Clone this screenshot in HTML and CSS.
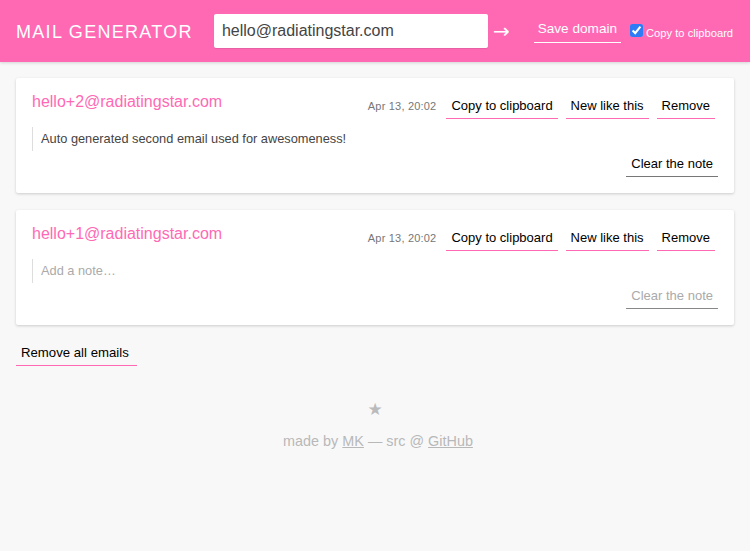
FILE: index.html
```html
<!DOCTYPE html>
<html>
<head>
<meta charset="utf-8">
<link rel="stylesheet" href="styles.css">
</head>
<body>
<header class="topbar">
  <h1 class="brand">MAIL GENERATOR</h1>
  <input class="domain-input" type="text" value="hello@radiatingstar.com">
  <span class="arrow">→</span>
  <button class="btn btn-light">Save domain</button>
  <label class="clip-opt"><input type="checkbox" checked><span>Copy to clipboard</span></label>
</header>
<main class="content">
  <section class="card">
    <div class="card-head">
      <div class="email">hello+2@radiatingstar.com</div>
      <div class="actions">
        <span class="date">Apr 13, 20:02</span>
        <button class="btn">Copy to clipboard</button>
        <button class="btn">New like this</button>
        <button class="btn">Remove</button>
      </div>
    </div>
    <div class="note">Auto generated second email used for awesomeness!</div>
    <div class="card-foot"><button class="btn btn-gray">Clear the note</button></div>
  </section>
  <section class="card">
    <div class="card-head">
      <div class="email">hello+1@radiatingstar.com</div>
      <div class="actions">
        <span class="date">Apr 13, 20:02</span>
        <button class="btn">Copy to clipboard</button>
        <button class="btn">New like this</button>
        <button class="btn">Remove</button>
      </div>
    </div>
    <div class="note note-empty">Add a note…</div>
    <div class="card-foot"><button class="btn btn-gray btn-disabled">Clear the note</button></div>
  </section>
  <div class="bottom-row"><button class="btn btn-wide">Remove all emails</button></div>
  <footer class="footer">
    <div class="star">★</div>
    <div class="credits">made by <a href="#">MK</a> — src @ <a href="#">GitHub</a></div>
  </footer>
</main>
</body>
</html>
```

FILE: styles.css
```css
* { box-sizing: border-box; }
html, body { margin: 0; padding: 0; }
body {
  background: #f8f8f8;
  font-family: "Liberation Sans", Arial, sans-serif;
  color: #000;
  height: 551px;
  overflow: hidden;
}
.topbar {
  height: 62px;
  background: #ff69b4;
  display: flex;
  align-items: center;
  padding: 0 0 0 16px;
  box-shadow: 0 1px 3px rgba(0,0,0,0.15);
  white-space: nowrap;
}
.topbar > * { flex-shrink: 0; }
.brand {
  margin: 0;
  font-size: 18px;
  font-weight: normal;
  letter-spacing: 1.3px;
  color: #fff;
  line-height: 20px;
  padding-top: 2px;
}
.domain-input {
  margin-left: 21px;
  width: 274px;
  height: 34px;
  border: none;
  border-radius: 2px;
  padding: 0 8px;
  font-family: "Liberation Sans", Arial, sans-serif;
  font-size: 16px;
  color: #444;
  background: #fff;
  outline: none;
  box-shadow: 0 1px 1px rgba(0,0,0,0.1);
}
.arrow {
  color: #fff;
  font-size: 20px;
  margin-left: 5px;
  font-family: "DejaVu Sans", sans-serif;
  line-height: 20px;
}
.btn {
  font-family: "Liberation Sans", Arial, sans-serif;
  font-size: 13px;
  line-height: 15px;
  padding: 4px 5px 5px;
  background: transparent;
  border: none;
  border-bottom: 1px solid #ff69b4;
  color: #000;
  cursor: pointer;
  margin: 0;
}
.btn-light {
  color: #fff;
  border-bottom-color: #fff;
  font-size: 13.6px;
  line-height: 16px;
  margin-left: 24px;
  margin-top: -2px;
  padding: 4px 4px 5px;
}
.clip-opt {
  display: flex;
  align-items: center;
  margin-left: 9px;
  color: #fff;
  font-size: 11.2px;
  margin-top: -2px;
}
.clip-opt input {
  margin: 0 3px 0 0;
  width: 13px;
  height: 13px;
  accent-color: #2f7bf5;
}
.clip-opt span { padding-top: 5px; }

.content { padding: 16px; }
.card {
  background: #fff;
  border-radius: 2px;
  box-shadow: 0 1px 3px rgba(0,0,0,0.18);
  padding: 16px;
  margin-bottom: 17px;
  height: 115px;
}
.card-head {
  display: flex;
  justify-content: space-between;
  align-items: flex-start;
}
.email {
  color: #ff69b4;
  font-size: 16px;
  line-height: 18px;
  margin-top: -1px;
}
.actions {
  display: flex;
  align-items: baseline;
  gap: 8px;
  padding-right: 3px;
}
.date {
  font-size: 11px;
  color: #777;
  margin-right: 2px;
  letter-spacing: 0.2px;
}
.note {
  margin-top: 8px;
  border-left: 1px solid #ddd;
  padding-left: 8px;
  font-size: 12.8px;
  line-height: 24px;
  color: #444;
}
.note-empty { color: #aaa; }
.card-foot {
  display: flex;
  justify-content: flex-end;
  margin-top: 1px;
}
.btn-gray { border-bottom-color: #777; }
.btn-disabled { color: #aaa; border-bottom-color: #888; }
.bottom-row {
  display: flex;
  margin-top: -1px;
}
.btn-wide { padding-left: 5px; padding-right: 8px; font-size: 13.2px; }
.footer {
  text-align: center;
  color: #b8b8b8;
  margin-top: 34px;
}
.star {
  font-family: "DejaVu Sans", sans-serif;
  font-size: 17px;
  line-height: 18px;
  color: #bbb;
}
.credits {
  margin-top: 14px;
  font-size: 14.4px;
  line-height: 18px;
  padding-left: 6px;
}
.credits a { color: #b8b8b8; text-decoration: underline; }
```
